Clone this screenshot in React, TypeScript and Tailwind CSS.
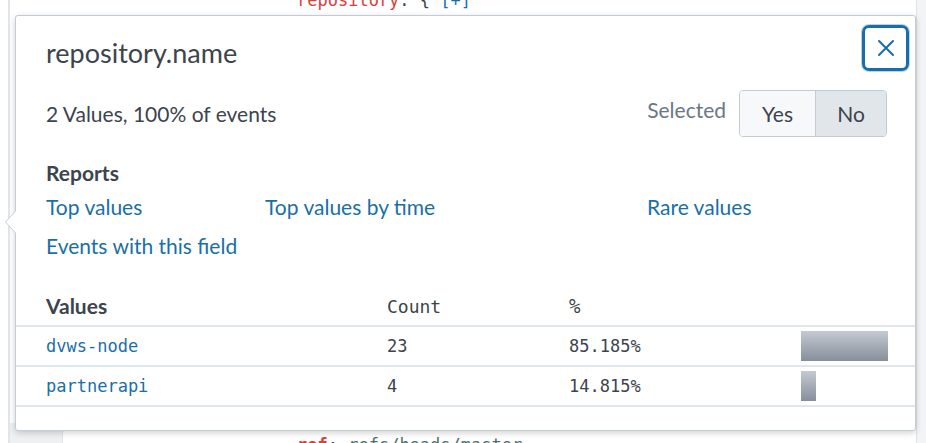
import React from "react";

const rows = [
  { name: "dvws-node", count: "23", pct: "85.185%", val: 85.185 },
  { name: "partnerapi", count: "4", pct: "14.815%", val: 14.815 },
];

export default function App() {
  return (
    <div className="relative w-[926px] h-[443px] overflow-hidden bg-white font-['Lato',sans-serif] text-[#3c444d]">
      {/* background page */}
      <div className="absolute inset-0 flex">
        <div className="w-[8px] bg-white" />
        <div className="w-[2px] bg-[#e1e5e9]" />
        <div className="w-[52px] flex flex-col">
          <div className="flex-1" />
          <div className="h-[20px] bg-[#eef0f2]" />
        </div>
        <div className="w-[1px] flex flex-col">
          <div className="flex-1" />
          <div className="h-[20px] bg-[#e1e5e9]" />
        </div>
        <div className="flex-1 flex flex-col justify-between font-['DejaVu_Sans_Mono',monospace] text-[17px] leading-[20px] pl-[234px]">
          <div className="mt-[-10px]">
            <span className="text-[#d8403c]">repository</span>
            <span className="text-[#3c444d]">: {"{"} </span>
            <span className="text-[#1a6fa6]">[+]</span>
          </div>
          <div className="mb-[-12px]">
            <span className="text-[#d8403c] font-bold">ref</span>
            <span className="text-[#3c444d]">: </span>
            <span className="text-[#4f6f6a]">refs/heads/master</span>
          </div>
        </div>
        <div className="w-[10px] bg-[#f3f4f6] border-l border-[#dfe3e8]" />
      </div>

      {/* popover */}
      <div className="absolute left-[15px] top-[15px] w-[901px] h-[416px] bg-white border border-[#c3cbd4] rounded-[3px] shadow-[0_2px_6px_rgba(0,0,0,0.18)]">
        {/* arrow */}
        <div className="absolute left-[-11px] top-[194px] w-0 h-0 border-y-[12px] border-y-transparent border-r-[11px] border-r-[#c3cbd4]" />
        <div className="absolute left-[-10px] top-[195px] w-0 h-0 border-y-[11px] border-y-transparent border-r-[10px] border-r-white" />

        <div className="flex items-start justify-between pl-[30px] pr-[6px] pt-[9px]">
          <h2 className="mt-[12px] text-[27px] leading-[32px] font-normal">repository.name</h2>
          <button className="w-[47px] h-[46px] rounded-[7px] border-[3px] border-[#1a6ea8] flex items-center justify-center text-[#1a6ea8] shadow-[0_0_0_1px_rgba(26,110,168,0.3)]">
            <svg width="18" height="18" viewBox="0 0 18 18">
              <path d="M2 2 L16 16 M16 2 L2 16" stroke="currentColor" strokeWidth="2" strokeLinecap="round" />
            </svg>
          </button>
        </div>

        <div className="flex items-center justify-between pl-[30px] pr-[28px] mt-[19px]">
          <div className="text-[21px] leading-[24px]">2 Values, 100% of events</div>
          <div className="flex items-center">
            <span className="text-[21px] leading-[24px] text-[#6b7785] mr-[13px] mb-[8px]">Selected</span>
            <div className="flex h-[47px] border border-[#c3cbd4] rounded-[4px] overflow-hidden text-[21px]">
              <div className="w-[76px] flex items-center justify-center bg-[#f7f8fa] border-r border-[#c3cbd4]">Yes</div>
              <div className="w-[70px] flex items-center justify-center bg-[#e1e6eb]">No</div>
            </div>
          </div>
        </div>

        <div className="pl-[30px] mt-[24px] text-[21px] leading-[24px] font-bold">Reports</div>
        <div className="pl-[30px] mt-[10px] grid grid-cols-[219px_382px_1fr] text-[21px] leading-[24px] text-[#1a6fa6]">
          <span>Top values</span>
          <span>Top values by time</span>
          <span>Rare values</span>
        </div>
        <div className="pl-[30px] mt-[15px] text-[21px] leading-[24px] text-[#1a6fa6]">Events with this field</div>

        <div className="mt-[29px]">
          <div className="grid grid-cols-[341px_182px_232px_1fr] items-center pl-[30px] h-[40px] border-b-2 border-[#e1e6eb] text-[17px]">
            <span className="font-bold text-[21px]">Values</span>
            <span className="font-['DejaVu_Sans_Mono',monospace] text-[18px]">Count</span>
            <span className="font-['DejaVu_Sans_Mono',monospace] text-[19px]">%</span>
            <span />
          </div>
          {rows.map((r) => (
            <div key={r.name} className="grid grid-cols-[341px_182px_232px_1fr] items-center pl-[30px] h-[40px] border-b-2 border-[#e1e6eb] font-['DejaVu_Sans_Mono',monospace] text-[17px]">
              <span className="text-[#1a6fa6] pt-[2px]">{r.name}</span>
              <span className="pt-[2px]">{r.count}</span>
              <span className="pt-[2px]">{r.pct}</span>
              <div className="h-[30px]">
                <div
                  className="h-full bg-gradient-to-b from-[#c3cad2] to-[#868f9b]"
                  style={{ width: `${Math.round(r.val * 1.02)}px` }}
                />
              </div>
            </div>
          ))}
        </div>
      </div>
    </div>
  );
}
